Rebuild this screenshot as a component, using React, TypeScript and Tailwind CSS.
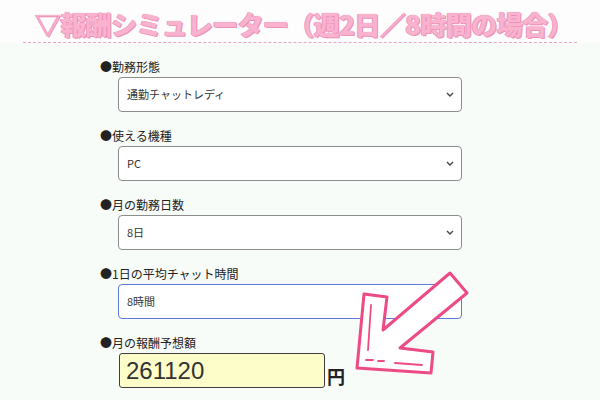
import React from 'react';

const FIELDS = [
  { label: '●勤務形態', value: '通勤チャットレディ', focus: false },
  { label: '●使える機種', value: 'PC', focus: false },
  { label: '●月の勤務日数', value: '8日', focus: false },
  { label: '●1日の平均チャット時間', value: '8時間', focus: true },
];

const Chevron = () => (
  <svg width="8" height="5" viewBox="0 0 8 5" className="shrink-0">
    <path d="M1 1l3 3 3-3" fill="none" stroke="#444" strokeWidth="1.4" />
  </svg>
);

const SelectBox = ({ value, focus }: { value: string; focus: boolean }) => (
  <div
    className={
      focus
        ? 'ml-[18px] w-[344px] h-[35px] flex items-center justify-between pl-[8px] pr-[7px] bg-white rounded-[4px] border-[1.5px] border-[#5b7bd6]'
        : 'ml-[18px] w-[344px] h-[35px] flex items-center justify-between pl-[8px] pr-[7px] bg-white rounded-[4px] border border-[#8c8c8c]'
    }
  >
    <span className="text-[11px] text-[#333]">{value}</span>
    <Chevron />
  </div>
);

export default function App() {
  return (
    <div className="relative w-[600px] h-[400px] overflow-hidden bg-[#f8fcf9] font-['Noto_Sans_CJK_JP','Noto_Sans',sans-serif]">
      {/* HEADER */}
      <div className="bg-[#fdfdfe] pt-[6px]">
        <h1 className="pl-[8px] text-center text-[26px] leading-[36px] font-black text-[#f9b3cf] tracking-[-0.6px] [text-shadow:0_0_1px_#e27dab,1px_1px_0_#ee95bd,-1px_0_0_#f3a9c9]">
          ▽報酬シミュレーター（週2日／8時間の場合）
        </h1>
        <div className="mx-[23px] border-b border-dashed border-[#e7a3c8]" />
      </div>

      {/* FORM */}
      <div className="pl-[100px] pt-[16px] flex flex-col gap-[16px]">
        {FIELDS.map(({ label, value, focus }, index) => (
          <div key={index} className="flex flex-col gap-[2px]">
            <span className="text-[12px] leading-[16px] text-[#222]">{label}</span>
            <SelectBox value={value} focus={focus} />
          </div>
        ))}

        <div className="flex flex-col gap-[2px]">
          <span className="text-[12px] leading-[16px] text-[#222]">●月の報酬予想額</span>
          <div className="flex items-end">
            <div className="ml-[19px] w-[206px] h-[35px] flex items-center pl-[6px] bg-[#fdfdc9] border border-[#3f3f3f] rounded-[3px]">
              <span className="font-['Liberation_Sans',sans-serif] text-[24px] text-[#333]">261120</span>
            </div>
            <span className="ml-[2px] mb-[2px] text-[18px] leading-[20px] font-bold text-[#222]">円</span>
          </div>
        </div>
      </div>

      {/* ARROW */}
      <svg className="absolute left-0 top-0 pointer-events-none" width="600" height="400" viewBox="0 0 600 400">
        <polygon
          points="357,368 364,294 387,297 383,330 450,273 467,293 400,348 433,352 431,373"
          fill="#fff"
          stroke="#ec4b86"
          strokeWidth="3"
          strokeLinejoin="round"
        />
        <g stroke="#ec4b86" strokeWidth="1.8" strokeLinecap="round">
          <line x1="371" y1="305" x2="368" y2="350" />
          <line x1="366" y1="360" x2="373" y2="360" />
          <line x1="378" y1="361" x2="384" y2="361" />
          <line x1="395" y1="363" x2="422" y2="365" />
        </g>
      </svg>
    </div>
  );
}
